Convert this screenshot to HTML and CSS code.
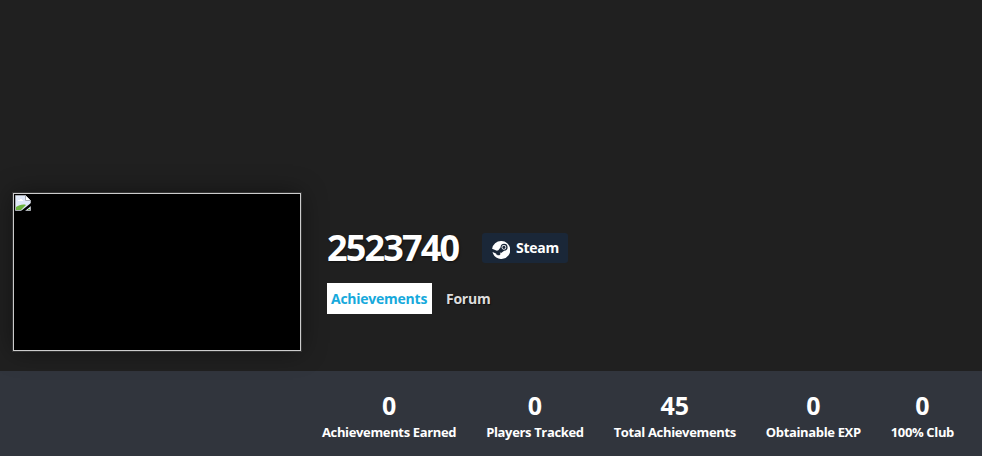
FILE: index.html
```html
<!DOCTYPE html>
<html>
<head>
    <link rel="stylesheet" href="styles.css">
</head>
<body>
<div class="banner">
    <div class="cover">
        <svg class="broken" width="16" height="16" viewBox="0 0 16 16">
            <path d="M0.5 0.5H10.5L15.5 5.5V15.5H0.5Z" fill="#dfe8f8" stroke="#a9adb3"/>
            <path d="M10.5 0.5V5.5H15.5" fill="#fff" stroke="#a9adb3"/>
            <path d="M3 5h2V4h2v1h1v1H3Z" fill="#fff"/>
            <path d="M1 15V12C4 10 8 9 11 10L6 15Z" fill="#6cb33f"/>
            <path d="M6 16L16 8V11L10 16Z" fill="#000"/>
            <path d="M13 14h2v1h-2Z" fill="#6cb33f"/>
        </svg>
    </div>
    <div class="info">
        <div class="title-row">
            <h1 class="title">2523740</h1>
            <a class="steam-badge">
                <svg class="steam-icon" width="18" height="18" viewBox="0 0 18 18">
                    <path fill="#fff" d="M9 0a9 9 0 0 0-8.9 7.7l4.8 2a2.6 2.6 0 0 1 1.5-.4l2.2-3.1a3.5 3.5 0 1 1 3.6 3.5l-3.1 2.2a2.6 2.6 0 0 1-5.1.6L.5 11.1A9 9 0 1 0 9 0Z"/>
                    <path fill="#fff" d="M5.7 14l-1.1-.5a2 2 0 0 0 3.6-.1 2 2 0 0 0-1.5-2.6l1.1.5a1.5 1.5 0 1 1-1.1 2.7Z"/>
                    <path fill="#fff" fill-rule="evenodd" d="M11.9 3.9a2.4 2.4 0 1 0 0 4.8 2.4 2.4 0 0 0 0-4.8Zm0 .8a1.6 1.6 0 1 1 0 3.2 1.6 1.6 0 0 1 0-3.2Z"/>
                </svg>
                <span class="steam-text">Steam</span>
            </a>
        </div>
        <div class="tabs">
            <a class="tab tab-active">Achievements</a>
            <a class="tab">Forum</a>
        </div>
    </div>
</div>
<div class="stats">
    <div class="stat"><div class="stat-num">0</div><div class="stat-label">Achievements Earned</div></div>
    <div class="stat"><div class="stat-num">0</div><div class="stat-label">Players Tracked</div></div>
    <div class="stat"><div class="stat-num">45</div><div class="stat-label">Total Achievements</div></div>
    <div class="stat"><div class="stat-num">0</div><div class="stat-label">Obtainable EXP</div></div>
    <div class="stat"><div class="stat-num">0</div><div class="stat-label">100% Club</div></div>
</div>
</body>
</html>
```

FILE: styles.css
```css
body {
  margin: 0;
  background-color: #202020;
  font-family: "Open Sans", sans-serif;
  color: white;
}

.banner {
  height: 371px;
  box-sizing: border-box;
  padding: 0 0 20px 13px;
  display: flex;
  align-items: flex-end;
}

.cover {
  width: 288px;
  height: 158px;
  box-sizing: border-box;
  border: 1px solid #cccccc;
  background-color: black;
  box-shadow: 0 0 0 1px #333333, 0 0 24px rgba(0, 0, 0, 0.45);
  padding: 1px;
}

.broken {
  display: block;
}

.info {
  margin-left: 26px;
  margin-bottom: 37px;
}

.title-row {
  display: flex;
  align-items: center;
}

.title {
  width: 155px;
  margin: 0;
  font-size: 36px;
  line-height: 32px;
  font-weight: 700;
  letter-spacing: -1.85px;
  text-shadow: 1px 1px 2px rgba(0, 0, 0, 0.5);
}

.steam-badge {
  width: 86px;
  height: 30px;
  box-sizing: border-box;
  padding-left: 10px;
  display: flex;
  align-items: center;
  gap: 6px;
  border-radius: 3px;
  background-color: #1a2738;
  font-size: 14px;
  font-weight: 700;
  letter-spacing: -0.25px;
}

.steam-icon {
  margin-top: 3px;
}

.steam-text {
  margin-bottom: 1px;
}

.tabs {
  margin-top: 19px;
  display: flex;
  gap: 14px;
}

.tab {
  height: 31px;
  line-height: 31px;
  font-size: 14px;
  font-weight: 700;
  letter-spacing: -0.25px;
  color: #dddddd;
  text-shadow: 1px 1px 1px rgba(0, 0, 0, 0.5);
}

.tab-active {
  width: 105px;
  box-sizing: border-box;
  padding-left: 4px;
  background-color: white;
  color: #16a9dc;
  text-shadow: none;
}

.stats {
  height: 85px;
  box-sizing: border-box;
  padding: 19px 28px 0 0;
  display: flex;
  justify-content: flex-end;
  gap: 30px;
  background-color: #31353d;
}

.stat {
  text-align: center;
}

.stat-num {
  font-size: 25px;
  line-height: 31px;
  font-weight: 700;
}

.stat-label {
  font-size: 13px;
  line-height: 23px;
  font-weight: 700;
  letter-spacing: -0.35px;
}
```
